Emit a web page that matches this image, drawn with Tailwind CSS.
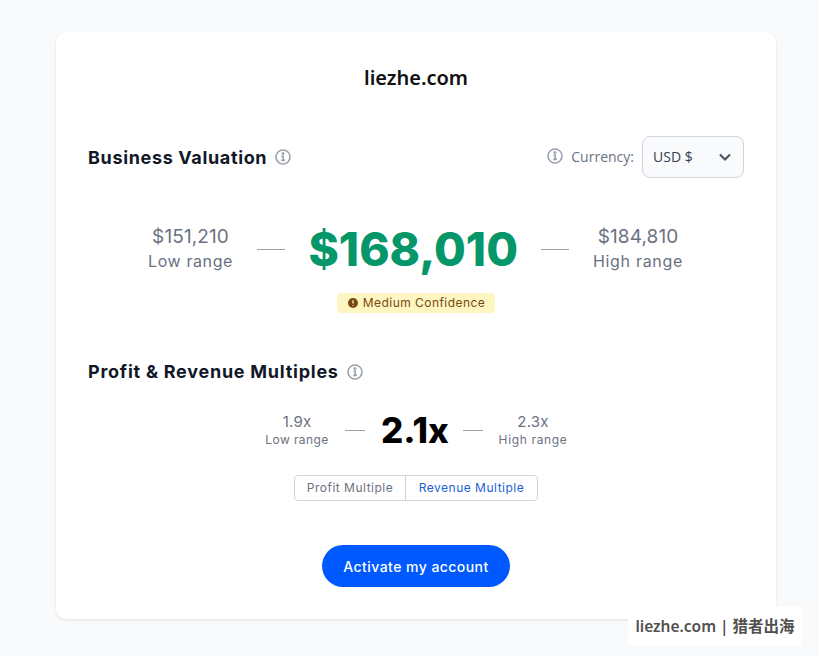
<!DOCTYPE html>
<html>
<head>
<meta charset="utf-8">
<script src="https://cdn.jsdelivr.net/npm/@tailwindcss/browser@4"></script>
</head>
<body class="bg-[#f9fafb] font-['Inter',sans-serif] w-[819px] h-[656px] overflow-hidden relative">
<div class="ml-14 mt-8 w-[720px] h-[587px] bg-white rounded-[10px] shadow-[0_1px_3px_rgba(0,0,0,0.1)] px-8 pt-[30px] flex flex-col">
  <h1 class="text-center text-[20px] leading-[32px] font-semibold text-[#111] font-['Noto_Sans',sans-serif]">liezhe.com</h1>
  <div class="mt-[42px] h-[42px] flex items-center justify-between">
    <div class="flex items-center gap-2">
      <h2 class="text-[18px] font-bold tracking-[0.65px] text-[#111827]">Business Valuation</h2>
      <svg class="w-4 h-4 text-[#9ca3af]" viewBox="0 0 16 16" fill="none" stroke="currentColor" stroke-width="1.6"><circle cx="8" cy="8" r="7"/><path d="M6.4 7.2H8.2V11.4M6.2 11.4H10" /><circle cx="8" cy="4.6" r="0.7" fill="currentColor"/></svg>
    </div>
    <div class="flex items-center">
      <svg class="w-4 h-4 text-[#9ca3af] mb-0.5" viewBox="0 0 16 16" fill="none" stroke="currentColor" stroke-width="1.6"><circle cx="8" cy="8" r="7"/><path d="M6.4 7.2H8.2V11.4M6.2 11.4H10" /><circle cx="8" cy="4.6" r="0.7" fill="currentColor"/></svg>
      <span class="ml-2 pb-0.5 text-[14px] text-[#6b7280] font-['Open_Sans',sans-serif]">Currency:</span>
      <div class="ml-2 w-[102px] h-[42px] border border-[#d1d5db] rounded-lg bg-[#f9fafb] flex items-center justify-between pl-[10px] pr-[10px] text-[14px] text-[#374151] font-['Open_Sans',sans-serif]">
        <span class="pb-0.5">USD $</span>
        <svg class="w-4 h-4 text-[#4b5563]" viewBox="0 0 16 16" fill="none" stroke="currentColor" stroke-width="2.2"><path d="M3 5.5L8 10.5L13 5.5"/></svg>
      </div>
    </div>
  </div>
  <div class="mt-[40px] h-[62px] flex items-center justify-center gap-6">
    <div class="w-[84px] pb-1 text-center text-[#6b7280] whitespace-nowrap flex flex-col items-center">
      <div class="text-[19px] leading-[27px] tracking-[0.1px]">$151,210</div>
      <div class="text-[16px] leading-[22px] tracking-[0.6px]">Low range</div>
    </div>
    <div class="w-7 h-px bg-[#9ca3af]"></div>
    <div class="w-[208px] text-center text-[46px] leading-[62px] font-extrabold text-[#059669] whitespace-nowrap">$168,010</div>
    <div class="w-7 h-px bg-[#9ca3af]"></div>
    <div class="w-[91px] pb-1 text-center text-[#6b7280] whitespace-nowrap flex flex-col items-center">
      <div class="text-[19px] leading-[27px] tracking-[0.1px]">$184,810</div>
      <div class="text-[16px] leading-[22px] tracking-[0.7px]">High range</div>
    </div>
  </div>
  <div class="mt-[13px] flex justify-center">
    <div class="h-5 px-[10px] rounded bg-[#fef6c2] flex items-center gap-1 text-[12px] tracking-[0.45px] text-[#78490f]">
      <svg class="w-3 h-3" viewBox="0 0 12 12"><circle cx="6" cy="6" r="5" fill="#78490f"/><path d="M6 3.2V6.4M6 8V8.8" stroke="#fef6c2" stroke-width="1.3"/></svg>
      <span>Medium Confidence</span>
    </div>
  </div>
  <div class="mt-[46px] flex items-center gap-2">
    <h2 class="text-[18px] leading-[26px] font-bold tracking-[0.75px] text-[#111827]">Profit &amp; Revenue Multiples</h2>
    <svg class="w-4 h-4 text-[#9ca3af]" viewBox="0 0 16 16" fill="none" stroke="currentColor" stroke-width="1.6"><circle cx="8" cy="8" r="7"/><path d="M6.4 7.2H8.2V11.4M6.2 11.4H10" /><circle cx="8" cy="4.6" r="0.7" fill="currentColor"/></svg>
  </div>
  <div class="mt-[23px] h-[44px] flex items-center justify-center gap-4">
    <div class="w-16 text-center text-[#6b7280] whitespace-nowrap flex flex-col items-center">
      <div class="text-[15px] leading-[20px] tracking-[0.2px]">1.9x</div>
      <div class="text-[12px] leading-[16px] tracking-[0.4px]">Low range</div>
    </div>
    <div class="w-5 h-px bg-[#9ca3af]"></div>
    <div class="w-[66px] text-center text-[35px] leading-[44px] font-extrabold text-black whitespace-nowrap">2.1x</div>
    <div class="w-5 h-px bg-[#9ca3af]"></div>
    <div class="w-[68px] text-center text-[#6b7280] whitespace-nowrap flex flex-col items-center">
      <div class="text-[15px] leading-[20px] tracking-[0.2px]">2.3x</div>
      <div class="text-[12px] leading-[16px] tracking-[0.65px]">High range</div>
    </div>
  </div>
  <div class="mt-[23px] flex justify-center">
    <div class="h-[26px] flex border border-[#d1d5db] rounded-sm text-[12px] tracking-[0.5px] whitespace-nowrap">
      <div class="w-[111px] flex items-center justify-center text-[#6b7280] border-r border-[#d1d5db]">Profit Multiple</div>
      <div class="w-[131px] flex items-center justify-center text-[#1d5fd8]">Revenue Multiple</div>
    </div>
  </div>
  <div class="mt-11 flex justify-center">
    <div class="w-[188px] h-[42px] rounded-full bg-[#0059ff] text-white text-[14px] font-medium tracking-[0.45px] flex items-center justify-center">Activate my account</div>
  </div>
</div>
<div class="absolute left-[628px] top-[607px] w-[174px] h-[38px] pt-px bg-white flex items-center justify-center text-[15.5px] font-semibold text-[#505050] font-['Noto_Sans','Noto_Sans_CJK_SC',sans-serif] whitespace-nowrap">liezhe.com | 猎者出海</div>
</body>
</html>
